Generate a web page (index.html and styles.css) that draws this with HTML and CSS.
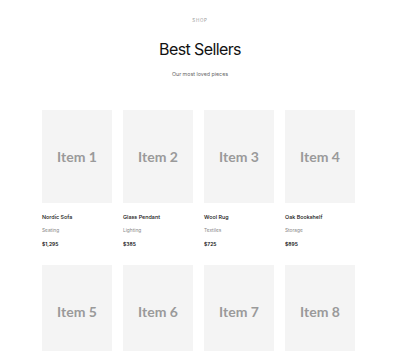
FILE: index.html
```html
<!DOCTYPE html>
<html lang="en">

<head>
    <meta charset="UTF-8">
    <meta name="viewport" content="width=device-width, initial-scale=1.0">
    <title>Best Sellers</title>
    <link rel="stylesheet" href="styles.css">
</head>

<body>
    <section class="shop">
        <!-- heading -->
        <div class="shop-head">
            <p class="eyebrow">SHOP</p>
            <h1 class="title">Best Sellers</h1>
            <p class="subtitle">Our most loved pieces</p>
        </div>

        <!-- products -->
        <div class="grid">
            <div class="card">
                <div class="thumb">Item 1</div>
                <p class="name">Nordic Sofa</p>
                <p class="cat">Seating</p>
                <p class="price">$1,295</p>
            </div>
            <div class="card">
                <div class="thumb">Item 2</div>
                <p class="name">Glass Pendant</p>
                <p class="cat">Lighting</p>
                <p class="price">$385</p>
            </div>
            <div class="card">
                <div class="thumb">Item 3</div>
                <p class="name">Wool Rug</p>
                <p class="cat">Textiles</p>
                <p class="price">$725</p>
            </div>
            <div class="card">
                <div class="thumb">Item 4</div>
                <p class="name">Oak Bookshelf</p>
                <p class="cat">Storage</p>
                <p class="price">$895</p>
            </div>
            <div class="card">
                <div class="thumb">Item 5</div>
                <p class="name">Linen Armchair</p>
                <p class="cat">Seating</p>
                <p class="price">$640</p>
            </div>
            <div class="card">
                <div class="thumb">Item 6</div>
                <p class="name">Brass Lamp</p>
                <p class="cat">Lighting</p>
                <p class="price">$210</p>
            </div>
            <div class="card">
                <div class="thumb">Item 7</div>
                <p class="name">Cotton Throw</p>
                <p class="cat">Textiles</p>
                <p class="price">$120</p>
            </div>
            <div class="card">
                <div class="thumb">Item 8</div>
                <p class="name">Walnut Cabinet</p>
                <p class="cat">Storage</p>
                <p class="price">$1,150</p>
            </div>
        </div>
    </section>
</body>

</html>
```

FILE: styles.css
```css
body {
    margin: 0;
    font-family: Inter, "Liberation Sans", sans-serif;
    background-color: #fff;
    color: #111;
}

.shop {
    padding: 18px 42px 0;
}

.shop-head {
    text-align: center;
}

.eyebrow {
    margin: 0;
    font-size: 4.5px;
    line-height: 6px;
    letter-spacing: 0.7px;
    color: #999;
}

.title {
    margin: 15px 0 0;
    font-size: 16px;
    line-height: 20px;
    font-weight: 400;
    letter-spacing: -0.6px;
}

.subtitle {
    margin: 11px 0 0;
    font-size: 5.3px;
    line-height: 8px;
    color: #666;
}

.grid {
    display: grid;
    grid-template-columns: repeat(4, 70px);
    column-gap: 11px;
    row-gap: 17px;
    margin-top: 32px;
}

.thumb {
    height: 93px;
    background-color: #f4f4f4;
    display: flex;
    align-items: center;
    justify-content: center;
    font-family: Lato, "Liberation Sans", sans-serif;
    font-weight: 700;
    font-size: 14px;
    color: #9a9a9a;
}

.name {
    margin: 10px 0 0;
    font-size: 5.4px;
    line-height: 8px;
    font-weight: 500;
    color: #111;
}

.cat {
    margin: 5px 0 0;
    font-size: 4.8px;
    line-height: 8px;
    color: #888;
}

.price {
    margin: 6px 0 0;
    font-size: 5px;
    line-height: 8px;
    font-weight: 600;
    color: #111;
}
```
